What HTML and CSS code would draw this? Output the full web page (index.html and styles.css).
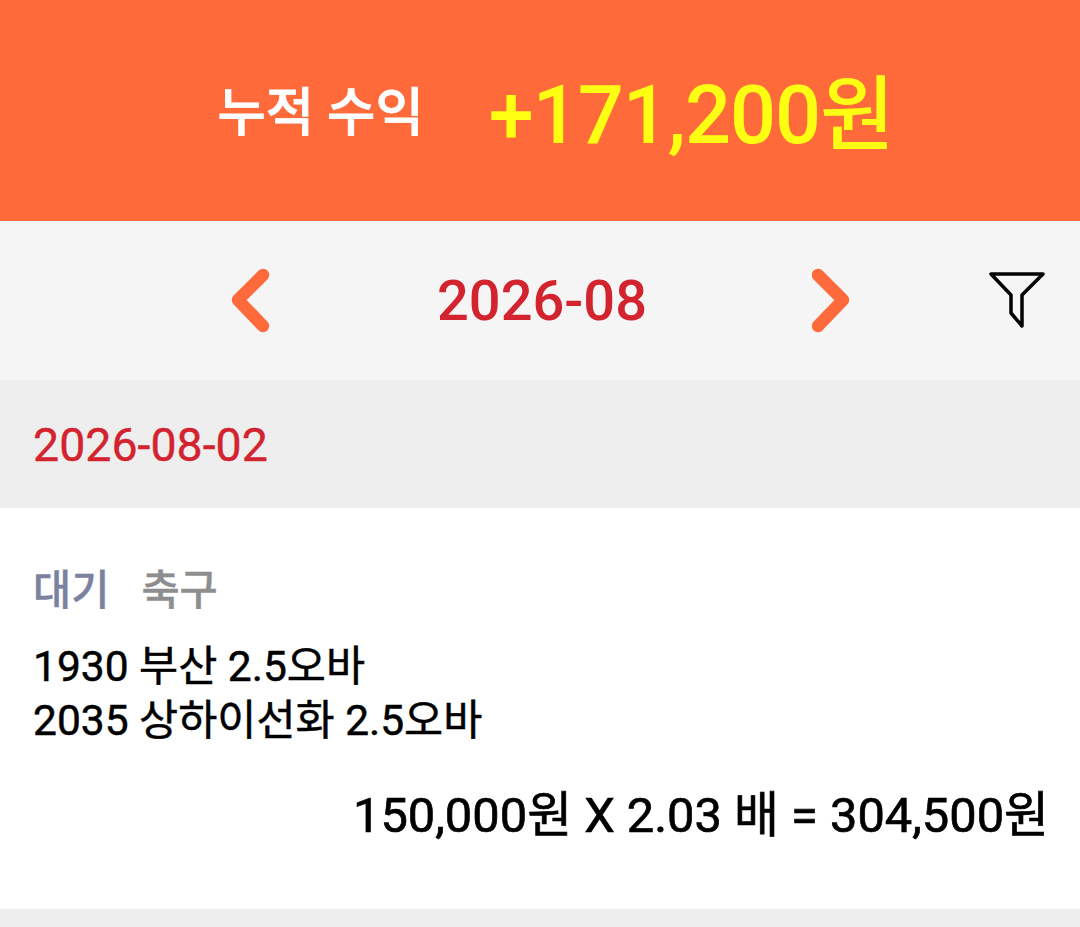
FILE: index.html
```html
<!DOCTYPE html>
<html lang="ko">
<head>
<meta charset="utf-8">
<title>누적 수익</title>
<link rel="stylesheet" href="styles.css">
</head>
<body>
<header class="summary">
  <span class="summary-label">누적 수익</span>
  <span class="summary-value">+171,200원</span>
</header>
<nav class="month-nav">
  <svg class="chev" viewBox="0 0 44 68" width="44" height="68"><path d="M35 8 L10 33 L35 59" fill="none" stroke="#ff6a3c" stroke-width="12.5" stroke-linecap="round" stroke-linejoin="round"/></svg>
  <span class="month">2026-08</span>
  <svg class="chev" viewBox="0 0 44 68" width="44" height="68"><path d="M6 8 L31 33 L6 59" fill="none" stroke="#ff6a3c" stroke-width="12.5" stroke-linecap="round" stroke-linejoin="round"/></svg>
  <svg class="filter" viewBox="0 0 56 58" width="56" height="58"><path d="M2 3 H54 L33 24 V55 L22 42 V24 Z" fill="none" stroke="#000" stroke-width="3.5" stroke-linejoin="round"/></svg>
</nav>
<div class="date-row">2026-08-02</div>
<section class="entry">
  <div class="tags"><span class="tag-status">대기</span><span class="tag-sport">축구</span></div>
  <div class="games">
    <div>1930 부산 2.5오바</div>
    <div>2035 상하이선화 2.5오바</div>
  </div>
  <div class="calc">150,000원 X 2.03 배 = 304,500원</div>
</section>
<div class="divider"></div>
</body>
</html>
```
FILE: styles.css
```css
* { box-sizing: border-box; }
html, body { margin: 0; padding: 0; }
body {
  width: 1080px;
  height: 927px;
  overflow: hidden;
  background: #fff;
  font-family: Roboto, "Noto Sans CJK KR", sans-serif;
}
.summary {
  height: 221px;
  background: #ff6a3a;
  display: flex;
  align-items: center;
  justify-content: center;
  gap: 65px;
  padding: 0 0 6px 31px;
}
.summary-label { color: #fff; font-size: 52.5px; font-weight: 500; -webkit-text-stroke: 0.8px #fff; }
.summary-value { color: #ffff14; font-size: 81px; font-weight: 500; letter-spacing: -1px; }
.month-nav {
  height: 159px;
  background: #f5f5f5;
  position: relative;
  display: flex;
  align-items: center;
  justify-content: center;
  gap: 165px;
  padding-left: 4px;
}
.month { color: #d2232f; font-size: 56px; font-weight: 500; }
.filter { position: absolute; left: 989px; top: 50px; }
.date-row {
  height: 128px;
  background: #eeeeee;
  display: flex;
  align-items: center;
  padding: 2px 0 0 33px;
  color: #d2232f;
  font-size: 46.5px;
  -webkit-text-stroke: 0.4px #d2232f;
}
.entry { height: 401px; padding: 53px 33px 0; display: flex; flex-direction: column; }
.tags { display: flex; gap: 32px; font-size: 41.5px; font-weight: 500; line-height: 60px; -webkit-text-stroke: 0.4px; }
.tag-status { color: #7b82a0; }
.tag-sport { color: #8e8e8e; }
.games { margin-top: 19px; font-size: 42.5px; line-height: 54px; color: #000; -webkit-text-stroke: 0.5px #000; }
.calc { margin-top: 36px; margin-right: -2px; text-align: right; font-size: 48.8px; line-height: 64px; color: #000; -webkit-text-stroke: 0.7px #000; }
.divider { height: 18px; background: #eeeeee; }
```
